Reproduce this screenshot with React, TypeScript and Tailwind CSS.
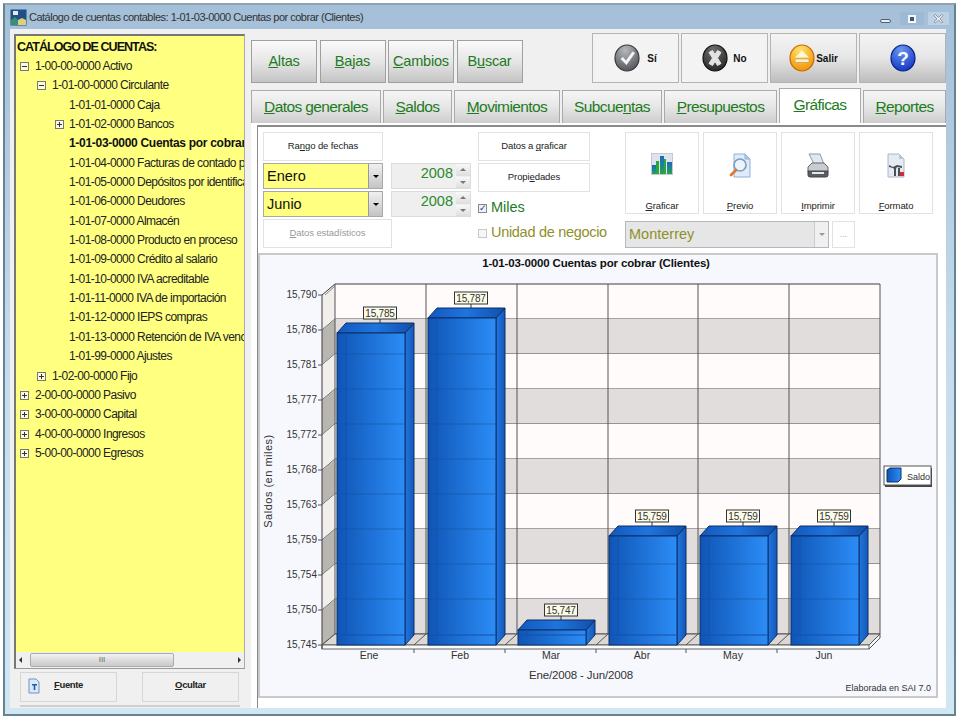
import type { ReactNode } from "react";

const tree = [
  { label: "1-00-00-0000 Activo", pad: 35, box: "-", at: 20 },
  { label: "1-01-00-0000 Circulante", pad: 52, box: "-", at: 37 },
  { label: "1-01-01-0000 Caja", pad: 69 },
  { label: "1-01-02-0000 Bancos", pad: 69, box: "+", at: 55 },
  { label: "1-01-03-0000 Cuentas por cobrar (Clientes)", pad: 69, bold: true },
  { label: "1-01-04-0000 Facturas de contado por cobrar", pad: 69 },
  { label: "1-01-05-0000 Depósitos por identificar", pad: 69 },
  { label: "1-01-06-0000 Deudores", pad: 69 },
  { label: "1-01-07-0000 Almacén", pad: 69 },
  { label: "1-01-08-0000 Producto en proceso", pad: 69 },
  { label: "1-01-09-0000 Crédito al salario", pad: 69 },
  { label: "1-01-10-0000 IVA acreditable", pad: 69 },
  { label: "1-01-11-0000 IVA de importación", pad: 69 },
  { label: "1-01-12-0000 IEPS compras", pad: 69 },
  { label: "1-01-13-0000 Retención de IVA vencida", pad: 69 },
  { label: "1-01-99-0000 Ajustes", pad: 69 },
  { label: "1-02-00-0000 Fijo", pad: 52, box: "+", at: 37 },
  { label: "2-00-00-0000 Pasivo", pad: 35, box: "+", at: 20 },
  { label: "3-00-00-0000 Capital", pad: 35, box: "+", at: 20 },
  { label: "4-00-00-0000 Ingresos", pad: 35, box: "+", at: 20 },
  { label: "5-00-00-0000 Egresos", pad: 35, box: "+", at: 20 },
];

const tools = [
  { pre: "", key: "A", post: "ltas" },
  { pre: "", key: "B", post: "ajas" },
  { pre: "", key: "C", post: "ambios" },
  { pre: "B", key: "u", post: "scar" },
];

const tabs = [
  { pre: "", key: "D", post: "atos generales", w: "w-[130px]" },
  { pre: "", key: "S", post: "aldos", w: "w-[69px]" },
  { pre: "", key: "M", post: "ovimientos", w: "w-[106px]" },
  { pre: "Subcue", key: "n", post: "tas", w: "w-[100px]" },
  { pre: "", key: "P", post: "resupuestos", w: "w-[113px]" },
  { pre: "", key: "G", post: "ráficas", w: "w-[82px]", active: true },
  { pre: "", key: "R", post: "eportes", w: "w-[83px]" },
];

function Sphere({ id, from, to, edge, children }: { id: string; from: string; to: string; edge: string; children: ReactNode }) {
  return (
    <svg width="26" height="28" viewBox="0 0 26 28">
      <defs>
        <radialGradient id={id} cx="0.42" cy="0.2" r="0.9">
          <stop offset="0" stopColor={from} />
          <stop offset="1" stopColor={to} />
        </radialGradient>
      </defs>
      <ellipse cx="13" cy="14" rx="12" ry="13" fill={`url(#${id})`} stroke={edge} strokeWidth="1.2" />
      {children}
    </svg>
  );
}

function BigButton({ children, dark }: { children: ReactNode; dark?: boolean }) {
  return (
    <div
      className={`flex h-[50px] w-[87px] items-center justify-center border border-[#b4b4b4] text-[10px] font-bold text-[#111] ${
        dark ? "bg-gradient-to-b from-[#f4f4f4] via-[#e6e6e6] to-[#bdbdbd]" : "bg-[#f3f3f3]"
      }`}
    >
      {children}
    </div>
  );
}

function Flat({ children, className, dim }: { children: ReactNode; className: string; dim?: boolean }) {
  return (
    <div className={`flex items-center justify-center border border-[#e2e2e2] bg-white text-[9.5px] tracking-[-0.1px] ${dim ? "text-[#9a9a9a]" : "text-[#222]"} ${className}`}>
      {children}
    </div>
  );
}

function Combo({ label }: { label: string }) {
  return (
    <div className="flex h-[26px] w-[120px] border border-[#a8a8a8] bg-[#ffff80]">
      <span className="flex-1 pl-[3px] text-[14.5px] leading-[24px] text-[#111]">{label}</span>
      <span className="flex w-[14px] items-center justify-center border-l border-[#999] bg-gradient-to-b from-[#f0f0f0] to-[#c4c4c4]">
        <span className="border-x-[3px] border-t-[3px] border-x-transparent border-t-black" />
      </span>
    </div>
  );
}

function Spinner() {
  return (
    <div className="flex h-[26px] w-[80px] border border-[#dcdcdc] bg-[#efefef]">
      <span className="flex-1 pr-[3px] text-right text-[14.5px] leading-[19px] text-[#2b8a2b]">2008</span>
      <span className="flex w-[14px] flex-col gap-px">
        <span className="flex flex-1 items-center justify-center bg-gradient-to-b from-[#f8f8f8] to-[#dedede]">
          <span className="border-x-[3px] border-b-[3px] border-x-transparent border-b-[#777]" />
        </span>
        <span className="flex flex-1 items-center justify-center bg-gradient-to-b from-[#f8f8f8] to-[#dedede]">
          <span className="border-x-[3px] border-t-[3px] border-x-transparent border-t-[#777]" />
        </span>
      </span>
    </div>
  );
}

function ActionButton({ icon, keyChar, post }: { icon: ReactNode; keyChar: string; post: string }) {
  return (
    <div className="flex h-[82px] w-[74px] flex-col items-center border border-[#e2e2e2] bg-white text-[9.5px] tracking-[-0.1px] text-[#222]">
      <div className="mt-[20px] h-[27px]">{icon}</div>
      <div className="mt-[19px]">
        <u>{keyChar}</u>
        {post}
      </div>
    </div>
  );
}

function Chart() {
  const ticks = ["15,790", "15,786", "15,781", "15,777", "15,772", "15,768", "15,763", "15,759", "15,754", "15,750", "15,745"];
  const months = ["Ene", "Feb", "Mar", "Abr", "May", "Jun"];
  const bars = [
    { x: 337, top: 333, label: "15,785" },
    { x: 428, top: 318, label: "15,787" },
    { x: 518, top: 630, label: "15,747" },
    { x: 609, top: 536, label: "15,759" },
    { x: 700, top: 536, label: "15,759" },
    { x: 791, top: 536, label: "15,759" },
  ];
  const dividers = [426, 517, 608, 698, 789];
  return (
    <svg width="680" height="445" viewBox="258 253 680 445" fontFamily='"Liberation Sans", Arial, sans-serif' className="block">
      <defs>
        <linearGradient id="barFront" x1="0" x2="1" y1="0" y2="0">
          <stop offset="0" stopColor="#0f55b5" />
          <stop offset="1" stopColor="#2c8df6" />
        </linearGradient>
        <linearGradient id="barSide" x1="0" x2="1" y1="0" y2="0">
          <stop offset="0" stopColor="#2177e0" />
          <stop offset="1" stopColor="#1358b8" />
        </linearGradient>
        <linearGradient id="barTop" x1="0" x2="1" y1="0" y2="0">
          <stop offset="0" stopColor="#1158bd" />
          <stop offset="0.5" stopColor="#1f74de" />
          <stop offset="1" stopColor="#1050ac" />
        </linearGradient>
      </defs>
      <rect x="259" y="254" width="678" height="443" fill="#f6f8fd" stroke="#c9c9c9" strokeWidth="2" />
      <text x="596" y="267" textAnchor="middle" fontSize="11.5" letterSpacing="-0.15" fontWeight="700" fill="#111">
        1-01-03-0000 Cuentas por cobrar (Clientes)
      </text>
      {Array.from({ length: 10 }, (_, i) => {
        const y = 284 + i * 35;
        return (
          <g key={y}>
            <rect x="335" y={y} width="545" height="35" fill={i % 2 ? "#e1dddc" : "#fefbfa"} />
            <polygon points={`322,${y + 11} 335,${y} 335,${y + 35} 322,${y + 46}`} fill={i % 2 ? "#b9b5b1" : "#f1eeec"} />
            <line x1="322" y1={y + 46} x2="335" y2={y + 35} stroke="#3c3c3c" />
            <line x1="335" y1={y + 35} x2="880" y2={y + 35} stroke="#4a4a4a" />
          </g>
        );
      })}
      <polygon points="322,645 335,634 880,634 869,645" fill="#dcd8d6" stroke="#555" />
      <rect x="322" y="645" width="547" height="4" fill="#fbfbfb" stroke="#666" />
      <line x1="869" y1="649" x2="880" y2="638" stroke="#555" />
      <line x1="880" y1="634" x2="880" y2="638" stroke="#555" />
      <line x1="335" y1="284" x2="880" y2="284" stroke="#3c3c3c" />
      <line x1="322" y1="295" x2="335" y2="284" stroke="#3c3c3c" />
      <line x1="322" y1="295" x2="322" y2="649" stroke="#3c3c3c" />
      <line x1="325" y1="295" x2="335" y2="286" stroke="#888" />
      {[335, ...dividers, 880].map((x) => (
        <line key={x} x1={x} y1="284" x2={x} y2="634" stroke="#555" />
      ))}
      {dividers.map((x) => (
        <g key={x}>
          <line x1={x - 12} y1="645" x2={x} y2="634" stroke="#555" />
          <line x1={x - 12} y1="649" x2={x - 12} y2="653" stroke="#555" />
        </g>
      ))}
      {ticks.map((t, i) => (
        <g key={t}>
          <line x1="318" y1={295 + i * 35} x2="322" y2={295 + i * 35} stroke="#555" />
          <text x="317" y={298 + i * 35} textAnchor="end" fontSize="10" fill="#333">
            {t}
          </text>
        </g>
      ))}
      {bars.map((b) => {
        const right = b.x + 68;
        const mid = b.x + 43;
        return (
          <g key={b.x} stroke="#0d2f66" strokeWidth="1">
            <polygon points={`${right},${b.top} ${right + 9},${b.top - 10} ${right + 9},635 ${right},645`} fill="url(#barSide)" />
            <polygon points={`${b.x},${b.top} ${b.x + 9},${b.top - 10} ${right + 9},${b.top - 10} ${right},${b.top}`} fill="url(#barTop)" />
            <rect x={b.x} y={b.top} width="68" height={645 - b.top} fill="url(#barFront)" />
            <line x1={b.x + 9} y1={b.top} x2={b.x + 9} y2="635" stroke="#1450a8" />
            <line x1={b.x} y1="635" x2={right} y2="635" stroke="#1450a8" />
            <line x1={mid} y1={b.top - 10} x2={mid} y2={b.top - 14} stroke="#333" />
            <rect x={mid - 16.5} y={b.top - 26} width="33" height="12" fill="#fbfbe8" stroke="#333" />
            <text x={mid} y={b.top - 16.5} textAnchor="middle" fontSize="10" letterSpacing="-0.2" fill="#333" stroke="none">
              {b.label}
            </text>
          </g>
        );
      })}
      {bars.map((b) =>
        [354, 389, 424, 459, 494, 529, 564, 599]
          .filter((y) => y > b.top)
          .map((y) => <line key={`${b.x}-${y}`} x1={b.x} y1={y} x2={b.x + 68} y2={y} stroke="#14509f" strokeOpacity="0.55" />),
      )}
      {months.map((m, i) => (
        <text key={m} x={369 + i * 91} y="659" textAnchor="middle" fontSize="10.5" fill="#333">
          {m}
        </text>
      ))}
      <text x="581" y="679" textAnchor="middle" fontSize="11.5" letterSpacing="-0.15" fill="#333">
        Ene/2008 - Jun/2008
      </text>
      <text transform="translate(272 481) rotate(-90)" textAnchor="middle" fontSize="11" letterSpacing="0.5" fill="#333">
        Saldos (en miles)
      </text>
      <rect x="885" y="468" width="47" height="19" fill="#444" />
      <rect x="884" y="466" width="47" height="19" fill="#fff" stroke="#555" />
      <polygon points="887,470 890,468 901,468 901,479 898,482 887,482" fill="url(#barFront)" stroke="#0d2f66" />
      <text x="930" y="480" textAnchor="end" fontSize="9" fill="#333">
        Saldo
      </text>
      <text x="931" y="691" textAnchor="end" fontSize="9" fill="#333">
        Elaborada en SAI 7.0
      </text>
    </svg>
  );
}

export default function App() {
  return (
    <div className="h-[720px] w-[960px] overflow-hidden bg-white px-[3px] pt-[3px] font-['Liberation_Sans',Arial,sans-serif]">
      <div className="flex h-[713px] w-[953px] flex-col border-2 border-[#66848f] border-t-[#8fa3b3] bg-gradient-to-b from-[#a4bfd8] via-[#c6dcee] to-[#d2e6f4]">
        <div className="flex h-[24px] shrink-0 items-center pl-[5px] pr-[5px]">
          <svg width="17" height="17" viewBox="0 0 17 17" className="mr-[2px]">
            <rect x="0.5" y="0.5" width="16" height="16" fill="#1e4f85" />
            <rect x="3" y="2" width="5" height="4" fill="#dfe9f2" />
            <path d="M1 16V11l4-3 3 3v5z" fill="#3a8f72" />
            <path d="M8 16v-5l4-2 4 2v5z" fill="#e0cf7a" />
          </svg>
          <span className="text-[11px] tracking-[-0.5px] text-[#333]">Catálogo de cuentas contables: 1-01-03-0000 Cuentas por cobrar (Clientes)</span>
          <div className="ml-auto mt-[3px] flex h-[14px] items-center gap-[3px]">
            <div className="flex h-[13px] w-[23px] items-end justify-center bg-[#a7c0d7] pb-[2px]">
              <span className="h-[4px] w-[11px] rounded-[2px] border border-[#4f6174] bg-[#e8eef4]" />
            </div>
            <div className="flex h-[13px] w-[24px] items-center justify-center bg-[#9db9d4]">
              <span className="flex h-[8px] w-[8px] items-center justify-center border border-[#f2f6fa] bg-[#f2f6fa]">
                <span className="h-[4px] w-[4px] bg-[#44566a]" />
              </span>
            </div>
            <div className="ml-[1px] flex h-[13px] w-[21px] items-center justify-center bg-[#bcd1e4]">
              <svg width="11" height="10" viewBox="0 0 11 10">
                <path d="M1 1.5l1.500-1 3 3 3-3 1.500 1-3 3.500 3 3-1.500 1-3-3-3 3-1.500-1 3-3z" fill="#e8eef4" stroke="#6f7d8a" strokeWidth="0.7" />
              </svg>
            </div>
          </div>
        </div>

        <div className="flex min-h-0 flex-1 pb-[6px] pl-[5px] pr-[8px]">
          <div className="flex w-[240px] shrink-0 flex-col bg-[#f0f0f0] pl-[4px]">
            <div className="mt-[5px] flex h-[635px] w-[231px] flex-col border-b border-l-2 border-r border-t-2 border-[#777] border-b-[#999] border-r-[#aaa]">
              <div className="min-h-0 flex-1 overflow-hidden bg-[#ffff80] pt-[2px] text-[12px] tracking-[-0.56px] text-[#222]">
                <div className="h-[19px] pl-[1px] text-[12.5px] font-bold leading-[18px] tracking-[-0.95px] text-[#111]">CATÁLOGO DE CUENTAS:</div>
                {tree.map((row) => (
                  <div key={row.label} className="relative h-[19.35px] whitespace-nowrap leading-[19px]" style={{ paddingLeft: row.pad - 16 }}>
                    {row.box && (
                      <span
                        className="absolute top-[5px] flex h-[9px] w-[9px] items-center justify-center border border-[#777] bg-[#fbfbe0]"
                        style={{ left: row.at - 16 }}
                      >
                        <span className="relative block h-px w-[5px] bg-[#333]">
                          {row.box === "+" && <span className="absolute left-[2px] top-[-2px] block h-[5px] w-px bg-[#333]" />}
                        </span>
                      </span>
                    )}
                    <span className={row.bold ? "font-bold tracking-[-0.3px] text-[#111]" : ""}>{row.label}</span>
                  </div>
                ))}
              </div>
              <div className="flex h-[16px] shrink-0 items-center bg-[#f0f0f0] px-[3px]">
                <span className="border-y-[3px] border-r-[3px] border-y-transparent border-r-[#333]" />
                <div className="ml-[8px] flex h-[14px] w-[144px] items-center justify-center rounded-[2px] border border-[#aaa] bg-gradient-to-b from-[#f2f2f2] to-[#c9c9c9] text-[8px] text-[#666]">III</div>
                <span className="ml-auto border-y-[3px] border-l-[3px] border-y-transparent border-l-[#333]" />
              </div>
            </div>
            <div className="mt-[3px] flex pl-[6px]">
              <div className="flex h-[30px] w-[97px] items-center border border-[#d6d6d6] pb-[3px] pl-[6px] text-[9.5px] font-bold tracking-[-0.35px] text-[#222]">
                <svg width="14" height="16" viewBox="0 0 14 16" className="mr-[13px]">
                  <path d="M2 1h7l3 3v11H2z" fill="#dbe8f8" stroke="#6f93c4" />
                  <path d="M5 6h5v1.5H8.3V12H6.7V7.5H5z" fill="#1f5fae" />
                </svg>
                <span>
                  <u>F</u>uente
                </span>
              </div>
              <div className="ml-[25px] flex h-[30px] w-[97px] items-center justify-center border border-[#d6d6d6] pb-[3px] text-[9.5px] font-bold tracking-[-0.35px] text-[#222]">
                <span>
                  <u>O</u>cultar
                </span>
              </div>
            </div>
            <div className="ml-[6px] mt-[3px] h-[2px] w-[220px] bg-[#cfcfcf]" />
          </div>

          <div className="flex min-w-0 flex-1 flex-col bg-[#f0f0f0] pl-[1px]">
            <div className="mt-[4px] flex">
              <div className="mt-[7px] flex gap-[2.5px]">
                {tools.map((t) => (
                  <div
                    key={t.post}
                    className="flex h-[43px] w-[66px] items-center justify-center border border-[#a0a0a0] bg-gradient-to-b from-[#fafafa] via-[#e6e6e6] to-[#c4c4c4] text-[14.5px] tracking-[-0.2px] text-[#1e7a1e]"
                  >
                    <span>
                      {t.pre}
                      <u>{t.key}</u>
                      {t.post}
                    </span>
                  </div>
                ))}
              </div>
              <div className="ml-[69.5px] flex gap-[2px]">
                <BigButton>
                  <Sphere id="si" from="#b5b8bc" to="#4a4c50" edge="#3a3a3a">
                    <path d="M6.500 15l2.500-2 3 3.500 6.500-9 2.500 1.500-8.500 12z" fill="#f4f4f4" />
                  </Sphere>
                  <span className="ml-[7px]">Sí</span>
                </BigButton>
                <BigButton>
                  <Sphere id="no" from="#6e6e6e" to="#222" edge="#111">
                    <path d="M7 8.500l3.500-2 2.500 4 2.500-4 3.500 2-3.500 5.500 3.500 5.500-3.500 2-2.500-4-2.500 4-3.500-2 3.500-5.500z" fill="#e4e4e4" stroke="#e4e4e4" strokeLinejoin="round" />
                  </Sphere>
                  <span className="ml-[5px]">No</span>
                </BigButton>
                <BigButton dark>
                  <Sphere id="salir" from="#ffe36a" to="#f08a00" edge="#c46a00">
                    <path d="M13 6.500l7 7H6z" fill="#fff6d8" />
                    <rect x="6" y="15" width="14" height="3.500" rx="1" fill="#fff6d8" stroke="#b97a20" strokeWidth="0.5" />
                  </Sphere>
                  <span className="ml-[1px]">Salir</span>
                </BigButton>
                <BigButton dark>
                  <Sphere id="ayuda" from="#6a98f0" to="#0a2fc0" edge="#06208c">
                    <text x="13" y="21" textAnchor="middle" fontSize="19" fontWeight="700" fill="#fff" fontFamily="Liberation Sans, sans-serif">
                      ?
                    </text>
                  </Sphere>
                </BigButton>
              </div>
            </div>

            <div className="mt-[5px] flex h-[35px] items-end gap-[2px]">
              {tabs.map((t) => (
                <div
                  key={t.post}
                  className={`flex items-center justify-center border border-b-0 border-[#aaa] text-[15.5px] tracking-[-0.6px] text-[#1e7a1e] ${t.w} ${
                    t.active ? "h-[35px] bg-white pb-[3px]" : "h-[33px] bg-gradient-to-b from-[#f6f6f6] via-[#e6e6e6] to-[#cdcdcd]"
                  }`}
                >
                  <span>
                    {t.pre}
                    <u>{t.key}</u>
                    {t.post}
                  </span>
                </div>
              ))}
            </div>

            <div className="flex flex-1 flex-col bg-white pl-[6px] pt-[2px]">
              <div className="flex-1 border-l border-t-2 border-[#8a8a8a]">
                <div className="mt-[5px] flex pl-[5px]">
                  <div className="flex w-[215px] flex-col gap-[2px]">
                    <Flat className="h-[29px] w-[120px]">
                      <span>
                        Ra<u>n</u>go de fechas
                      </span>
                    </Flat>
                    <div className="flex gap-[8px]">
                      <Combo label="Enero" />
                      <Spinner />
                    </div>
                    <div className="flex gap-[8px]">
                      <Combo label="Junio" />
                      <Spinner />
                    </div>
                    <Flat dim className="h-[29px] w-[129px]">
                      <span>
                        <u>D</u>atos estadísticos
                      </span>
                    </Flat>
                  </div>
                  <div className="flex w-[147px] flex-col gap-[2px]">
                    <Flat className="h-[29px] w-[112px]">
                      <span>
                        Datos a <u>g</u>raficar
                      </span>
                    </Flat>
                    <Flat className="h-[29px] w-[112px]">
                      <span>
                        Propi<u>e</u>dades
                      </span>
                    </Flat>
                    <div className="mt-[5px] flex h-[18px] items-center gap-[4px] text-[14.5px] text-[#1e7a1e]">
                      <span className="flex h-[9px] w-[9px] items-center justify-center border border-[#888] bg-[#eef2fa] text-[9px] leading-none text-[#1c3a7a]">✓</span>
                      Miles
                    </div>
                    <div className="mt-[5px] flex h-[18px] items-center gap-[4px] whitespace-nowrap text-[14.5px] tracking-[-0.3px] text-[#8f8f2a]">
                      <span className="h-[9px] w-[9px] border border-[#c8c8c8] bg-[#f6f6f6]" />
                      Unidad de negocio
                    </div>
                  </div>
                  <div className="flex flex-col gap-[7px]">
                    <div className="flex gap-[4px]">
                      <ActionButton
                        keyChar="G"
                        post="raficar"
                        icon={
                          <svg width="22" height="22" viewBox="0 0 22 22">
                            <defs>
                              <linearGradient id="chartBar" x1="0" x2="0" y1="0" y2="1">
                                <stop offset="0" stopColor="#1f68c0" />
                                <stop offset="0.6" stopColor="#1c8a8a" />
                                <stop offset="1" stopColor="#2aa63c" />
                              </linearGradient>
                            </defs>
                            <rect x="0.500" y="0.500" width="21" height="21" fill="#dfe3ee" stroke="#c2c8d4" />
                            <rect x="1" y="12" width="4" height="9" fill="url(#chartBar)" />
                            <rect x="5" y="8" width="3" height="13" fill="#2aa63c" />
                            <rect x="9" y="3" width="4" height="18" fill="url(#chartBar)" />
                            <rect x="13" y="6" width="2" height="15" fill="#2aa63c" />
                            <rect x="16" y="9" width="5" height="12" fill="url(#chartBar)" />
                          </svg>
                        }
                      />
                      <ActionButton
                        keyChar="P"
                        post="revio"
                        icon={
                          <svg width="22" height="26" viewBox="0 0 22 26">
                            <path d="M5 1h11l5 5v18H5z" fill="#dfeafa" stroke="#8fb0d8" />
                            <path d="M16 1v5h5z" fill="#b4cce8" stroke="#8fb0d8" />
                            <circle cx="11" cy="12" r="6" fill="#eaf4fc" stroke="#7f9cb8" strokeWidth="1.600" />
                            <path d="M7 17l-5 5" stroke="#e0762f" strokeWidth="2.600" strokeLinecap="round" />
                          </svg>
                        }
                      />
                      <ActionButton
                        keyChar="I"
                        post="mprimir"
                        icon={
                          <svg width="24" height="26" viewBox="0 0 24 26">
                            <path d="M3 1l11 0 4 10H8z" fill="#dfe8f2" stroke="#8f9aa6" />
                            <path d="M2 14l4-4h12l4 4v5H2z" fill="#c9ccd0" stroke="#666" />
                            <path d="M2 18h20v4a2 2 0 0 1-2 2H4a2 2 0 0 1-2-2z" fill="#5a5d62" stroke="#444" />
                            <path d="M6 19h12v2H6z" fill="#e8e8e8" />
                          </svg>
                        }
                      />
                      <ActionButton
                        keyChar="F"
                        post="ormato"
                        icon={
                          <svg width="20" height="26" viewBox="0 0 20 26">
                            <path d="M2 1h11l5 5v18H2z" fill="#e4ebf3" stroke="#a8b8c8" />
                            <path d="M13 1v5h5z" fill="#b4c8dc" />
                            <path d="M3 12l4 2 4-2 5 1v2l-5-1-1 2v7H8v-7l-1-1-4-1z" fill="#4c5054" />
                            <path d="M12 15h2v8h-2z" fill="#4c5054" />
                            <rect x="14" y="19" width="4" height="4" fill="#d02c3a" />
                          </svg>
                        }
                      />
                    </div>
                    <div className="flex gap-[3px]">
                      <div className="flex h-[27px] w-[204px] border border-[#b0b8c0] bg-[#e6e6e6]">
                        <span className="flex-1 pl-[3px] text-[14.5px] leading-[25px] text-[#8f8f2a]">Monterrey</span>
                        <span className="flex w-[14px] items-center justify-center border-l border-[#ccc] bg-[#f0f0f0]">
                          <span className="border-x-[3px] border-t-[3px] border-x-transparent border-t-[#999]" />
                        </span>
                      </div>
                      <div className="flex h-[27px] w-[23px] items-center justify-center border border-[#e2e2e2] text-[9px] text-[#aaa]">...</div>
                    </div>
                  </div>
                </div>
                <div className="mt-[5px]">
                  <Chart />
                </div>
              </div>
            </div>
          </div>
        </div>
      </div>
    </div>
  );
}
